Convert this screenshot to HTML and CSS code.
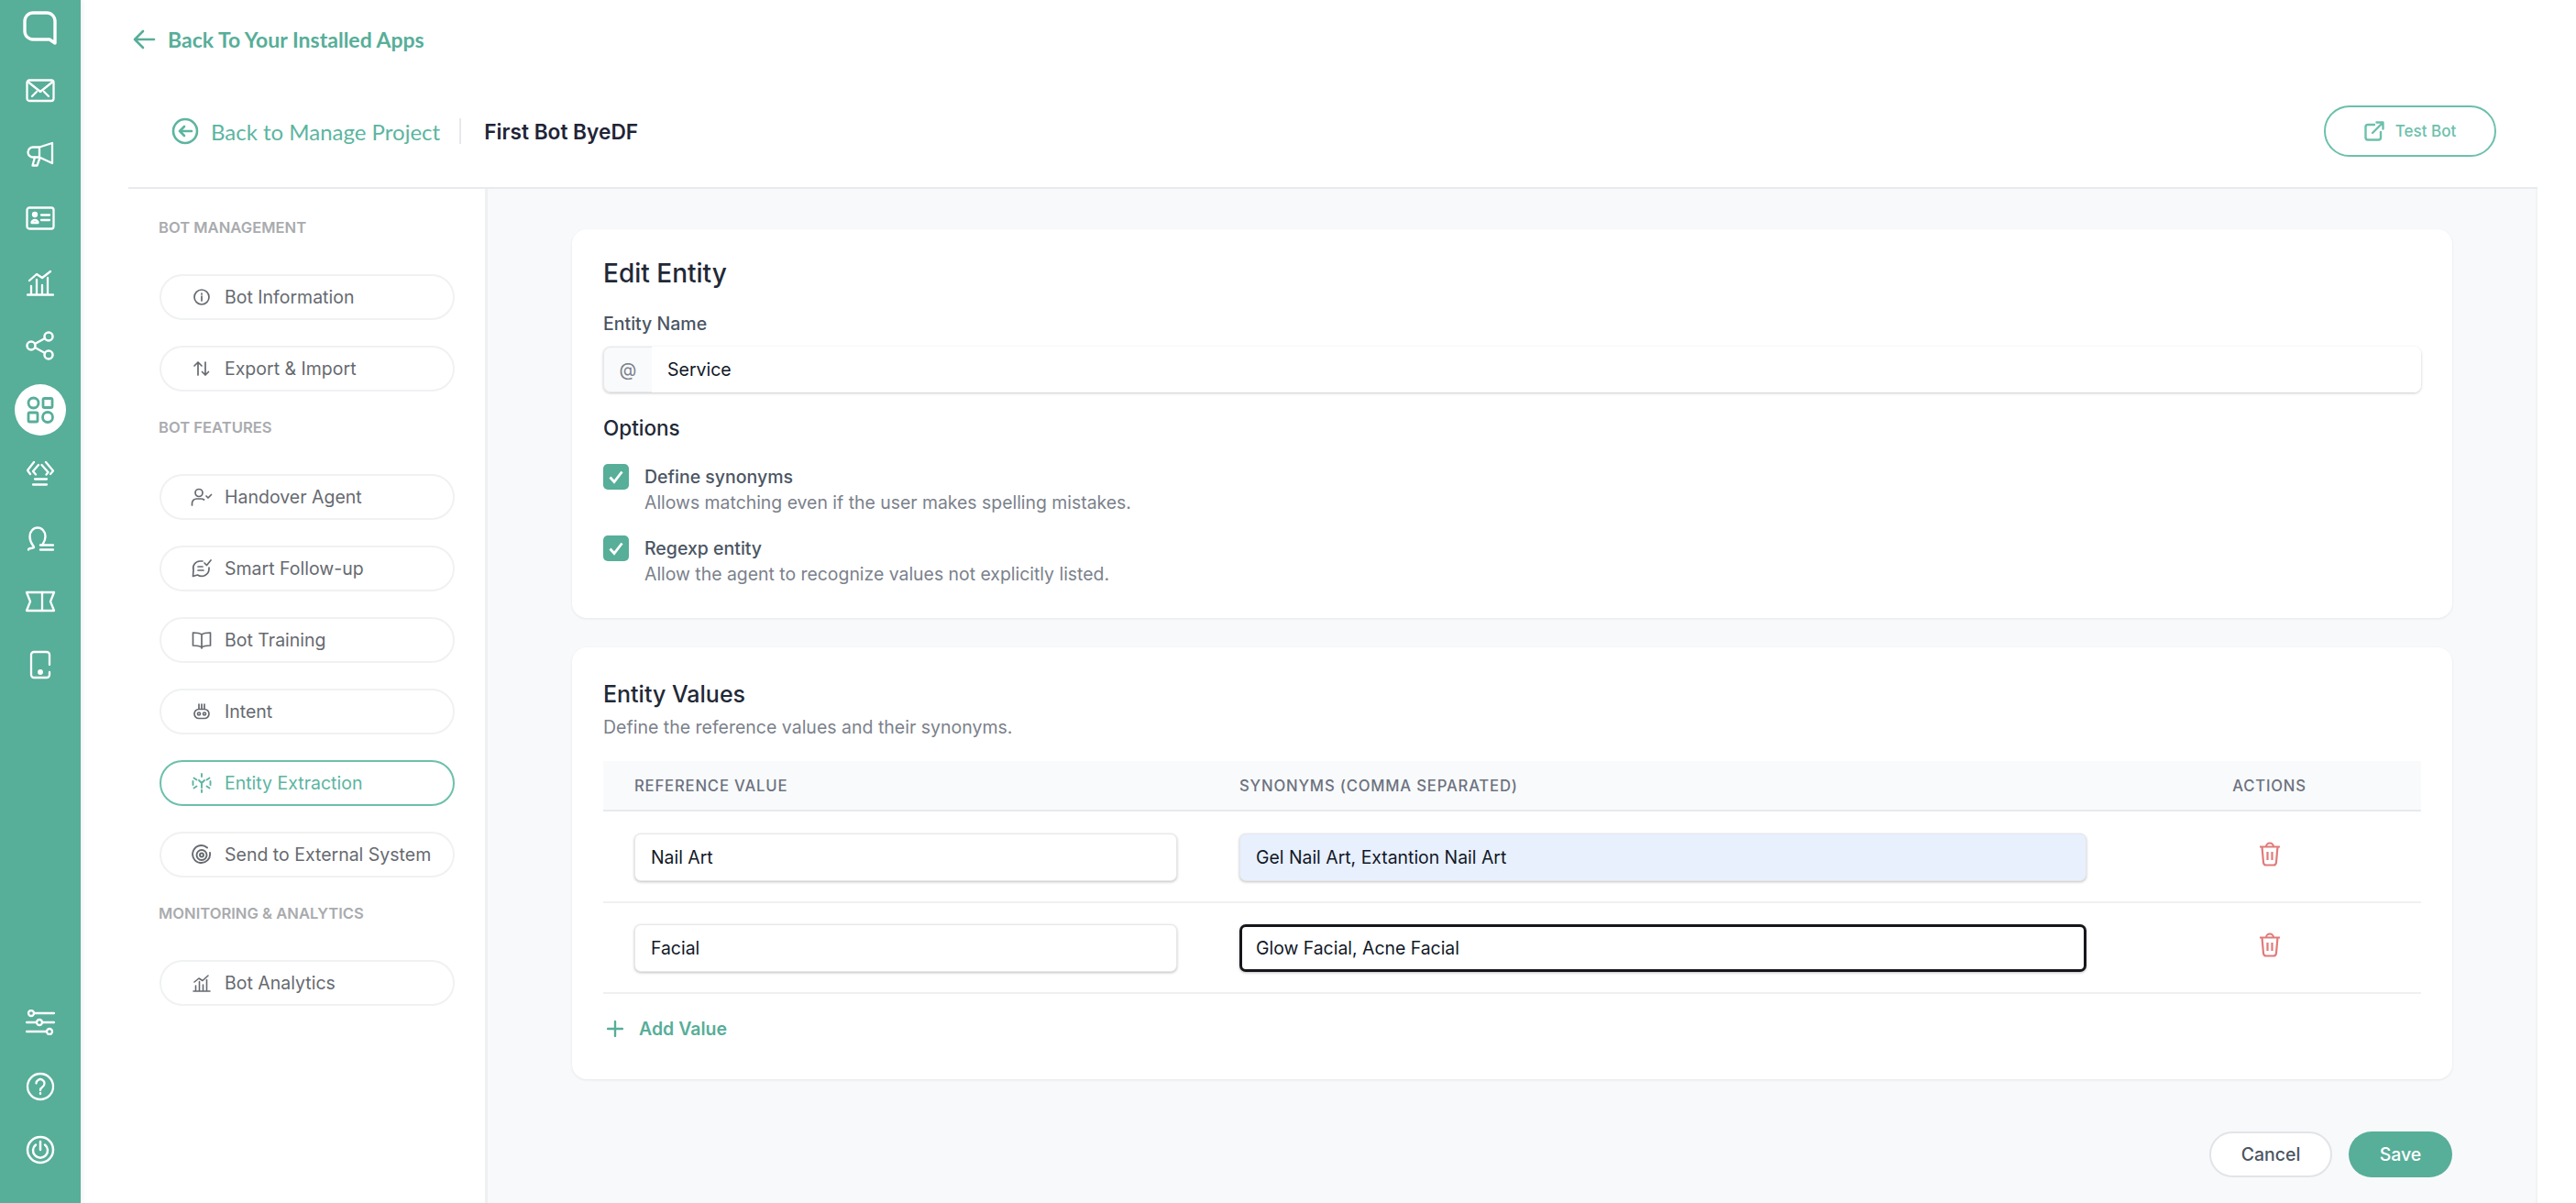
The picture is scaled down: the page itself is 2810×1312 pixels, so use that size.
FILE: index.html
```html
<!DOCTYPE html>
<html lang="en">
<head>
  <meta charset="UTF-8">
  <title>Edit Entity</title>
  <link rel="stylesheet" href="styles.css">
</head>
<body>
  <div class="rail">
    <div class="rail-logo">
      <svg class="ico" width="38" height="38" viewBox="0 0 38 38" stroke-width="3.400"><path d="M11 3h15a9 9 0 0 1 9 9v24l-6-4H11a9 9 0 0 1-9-9V12a9 9 0 0 1 9-9z"/></svg>
    </div>
    <div class="rail-list">
      <div class="rail-item">
        <svg class="ico" width="32" height="26" viewBox="0 0 32 26" stroke-width="2.300"><rect x="1.500" y="1.500" width="29" height="22.500" rx="2.500"/><path d="M3.500 4l12.500 10L28.500 4M7 19l5-5M25 19l-5-5"/></svg>
      </div>
      <div class="rail-item">
        <svg class="ico" width="30" height="28" viewBox="0 0 30 28" stroke-width="2.300"><path d="M28 2v22l-14-6.500H7a5.500 5.500 0 0 1 0-11h7L28 2zM14 6.500v11"/><path d="M9 17.500L6.500 26.500h5L14.500 18"/></svg>
      </div>
      <div class="rail-item">
        <svg class="ico" width="32" height="26" viewBox="0 0 32 26" stroke-width="2.300"><rect x="1.500" y="1.500" width="29" height="23" rx="2.500"/><circle cx="10" cy="9" r="2" fill="currentColor"/><path d="M6.500 18a3.500 3 0 0 1 7 0zM17 9.500h9M17 15h9"/></svg>
      </div>
      <div class="rail-item">
        <svg class="ico" width="30" height="30" viewBox="0 0 30 30" stroke-width="2.300"><path d="M1 28.500h28M5 27v-8M11 27V12M17 27v-9M23 27V10M3 13L11 6l6 4 9-7"/></svg>
      </div>
      <div class="rail-item">
        <svg class="ico" width="32" height="32" viewBox="0 0 32 32" stroke-width="2.500"><circle cx="6" cy="16" r="4.500"/><circle cx="25" cy="6" r="4.500"/><circle cx="25" cy="26" r="4.500"/><path d="M10 14l11-6M10 18l11 6"/></svg>
      </div>
      <div class="rail-item rail-active">
        <svg class="ico" width="30" height="30" viewBox="0 0 30 30" stroke-width="2.800"><circle cx="7.500" cy="7.500" r="5.500"/><rect x="18" y="2.500" width="10" height="10" rx="1.500"/><rect x="2" y="18" width="10" height="10" rx="1.500"/><circle cx="23" cy="23" r="5.500"/></svg>
      </div>
      <div class="rail-item">
        <svg class="ico" width="30" height="28" viewBox="0 0 30 28" stroke-width="2.300"><path d="M8 2L1 11l3 4M13 5l-6 7 3 3.500M21 2l8 9.500-3 3.500M16.500 5l7 8-2 2.500M9 20.500h13M7 26.500h15"/></svg>
      </div>
      <div class="rail-item">
        <svg class="ico" width="30" height="30" viewBox="0 0 30 30" stroke-width="2.400"><path d="M2 28.500c0-2 4-1 6-2.500.500-1.500-4.500-4-4.500-12a8.500 9.500 0 0 1 17 0c0 5-2.500 7.500-3.500 9.500"/><path d="M15 23.500h14M15 28.500h14"/></svg>
      </div>
      <div class="rail-item">
        <svg class="ico" width="34" height="24" viewBox="0 0 34 24" stroke-width="2.300"><path d="M2 2h30l-4 10 4 10H2l4-10L2 2z"/><path d="M19 2v20"/></svg>
      </div>
      <div class="rail-item">
        <svg class="ico" width="24" height="32" viewBox="0 0 24 32" stroke-width="2.300"><path d="M22 16V5a3 3 0 0 0-3-3H5a3 3 0 0 0-3 3v22a3 3 0 0 0 3 3h14a3 3 0 0 0 3-3v-3"/><circle cx="12" cy="24" r="1.800" fill="currentColor"/></svg>
      </div>
    </div>
    <div class="rail-bottom">
      <div class="rail-item">
        <svg class="ico" width="32" height="28" viewBox="0 0 32 28" stroke-width="2.300"><circle cx="6" cy="4" r="3"/><circle cx="15" cy="14" r="3"/><circle cx="26" cy="24" r="3"/><path d="M9 4h22M1 14h11M18 14h13M1 24h22"/></svg>
      </div>
      <div class="rail-item">
        <svg class="ico" width="32" height="32" viewBox="0 0 32 32" stroke-width="2.300"><circle cx="16" cy="16" r="14"/><path d="M11.500 12.500a4.500 4.500 0 1 1 6.800 3.900c-1.500.9-2.300 1.700-2.300 3.600M16 23v1"/></svg>
      </div>
      <div class="rail-item">
        <svg class="ico" width="32" height="32" viewBox="0 0 32 32" stroke-width="2.500"><circle cx="16" cy="16" r="14"/><path d="M11 10.500a8 8 0 1 0 10 0M16 7v9"/></svg>
      </div>
    </div>
  </div>

  <div class="page">
    <div class="top-link">
      <svg class="ico" width="26" height="24" viewBox="0 0 26 24" stroke-width="2.600"><path d="M24 12H3M12 3l-9 9 9 9"/></svg>
      <span>Back To Your Installed Apps</span>
    </div>

    <div class="page-head">
      <div class="back-project">
        <svg class="ico" width="30" height="30" viewBox="0 0 30 30" stroke-width="2.600"><circle cx="15" cy="15" r="13"/><path d="M22 15H9M14 10l-5 5 5 5"/></svg>
        <span>Back to Manage Project</span>
      </div>
      <div class="bot-name">First Bot ByeDF</div>
      <div class="test-btn">
        <svg class="ico" width="22" height="22" viewBox="0 0 22 22" stroke-width="2.400"><path d="M11 4H4a2.500 2.500 0 0 0-2.500 2.500V18A2.500 2.500 0 0 0 4 20.500h11.500A2.500 2.500 0 0 0 18 18v-6M9 13L20 2M13.500 1.500h7v7"/></svg>
        <span>Test Bot</span>
      </div>
    </div>

    <div class="workspace">
      <div class="sidebar">
        <div class="side-label">BOT MANAGEMENT</div>
        <div class="side-list">
          <div class="pill">
            <svg class="ico" width="20" height="20" viewBox="0 0 20 20" stroke-width="1.700"><circle cx="10" cy="10" r="8"/><path d="M10 9v5M10 6v1"/></svg>
            <span>Bot Information</span>
          </div>
          <div class="pill">
            <svg class="ico" width="20" height="20" viewBox="0 0 20 20" stroke-width="1.700"><path d="M6 17V3M2 7l4-4 4 4M14 3v14M10.500 13.500l3.500 3.500 3.500-3.500"/></svg>
            <span>Export &amp; Import</span>
          </div>
        </div>
        <div class="side-label">BOT FEATURES</div>
        <div class="side-list">
          <div class="pill">
            <svg class="ico" width="24" height="20" viewBox="0 0 24 20" stroke-width="1.700"><circle cx="9" cy="5.500" r="4"/><path d="M1.500 19v-2a5 5 0 0 1 5-5h5a5 5 0 0 1 3 1M17 9l2 2 3.500-3.500"/></svg>
            <span>Handover Agent</span>
          </div>
          <div class="pill">
            <svg class="ico" width="22" height="22" viewBox="0 0 22 22" stroke-width="1.700"><path d="M12 3H9a7.500 7.500 0 0 0-7 9.500l-.500 7 5-1.500a8 8 0 0 0 12.500-6.500V10M14 5l2.500 2.500L21 2M7 9h5M7 13h6"/></svg>
            <span>Smart Follow-up</span>
          </div>
          <div class="pill">
            <svg class="ico" width="22" height="20" viewBox="0 0 22 20" stroke-width="1.700"><path d="M11 4C9 2.500 6 2 1.500 2v14C6 16 9 16.500 11 18c2-1.500 5-2 9.500-2V2C16 2 13 2.500 11 4zM11 4v15"/></svg>
            <span>Bot Training</span>
          </div>
          <div class="pill">
            <svg class="ico" width="20" height="20" viewBox="0 0 20 20" stroke-width="1.700"><rect x="2" y="7.500" width="16" height="10" rx="5"/><circle cx="7" cy="12.500" r="1.500"/><circle cx="13" cy="12.500" r="1.500"/><path d="M7 2v5M10 2v5M13 2v5"/></svg>
            <span>Intent</span>
          </div>
          <div class="pill pill-active">
            <svg class="ico" width="22" height="22" viewBox="0 0 22 22" stroke-width="1.900"><path d="M11 1v3M11 18.500v2.500M11 16v-5M11 11L8 8M11 11l3-3M2.500 5.500l3 2M19.500 5.500l-3 2M2.500 16.500l3-2M19.500 16.500l-3-2M1.500 9v4M20.500 9v4"/></svg>
            <span>Entity Extraction</span>
          </div>
          <div class="pill">
            <svg class="ico" width="22" height="22" viewBox="0 0 22 22" stroke-width="1.900"><path d="M17 3.500A9.500 9.500 0 1 0 20 9"/><circle cx="11" cy="11.500" r="5.500"/><circle cx="11" cy="11.500" r="2"/></svg>
            <span>Send to External System</span>
          </div>
        </div>
        <div class="side-label">MONITORING &amp; ANALYTICS</div>
        <div class="side-list">
          <div class="pill">
            <svg class="ico" width="20" height="20" viewBox="0 0 20 20" stroke-width="1.600"><path d="M1 19h18M3.500 18v-5M7.500 18V8.500M11.500 18v-6M15.500 18V6.500M2 9l5-4 4 2.500L17 2"/></svg>
            <span>Bot Analytics</span>
          </div>
        </div>
      </div>

      <div class="main">
        <div class="card card-entity">
          <h2 class="card-title">Edit Entity</h2>
          <div class="field-label">Entity Name</div>
          <div class="input-group">
            <div class="input-addon">@</div>
            <div class="input-main">Service</div>
          </div>
          <div class="options-title">Options</div>
          <div class="check-row">
            <div class="check">
              <svg width="18" height="16" viewBox="0 0 18 16" fill="none" stroke="#fff" stroke-width="2.800"><path d="M2.500 8.500l4.500 5L15.500 2.500"/></svg>
            </div>
            <div>
              <div class="check-name">Define synonyms</div>
              <div class="check-desc">Allows matching even if the user makes spelling mistakes.</div>
            </div>
          </div>
          <div class="check-row">
            <div class="check">
              <svg width="18" height="16" viewBox="0 0 18 16" fill="none" stroke="#fff" stroke-width="2.800"><path d="M2.500 8.500l4.500 5L15.500 2.500"/></svg>
            </div>
            <div>
              <div class="check-name">Regexp entity</div>
              <div class="check-desc">Allow the agent to recognize values not explicitly listed.</div>
            </div>
          </div>
        </div>

        <div class="card card-values">
          <h2 class="card-title">Entity Values</h2>
          <div class="card-desc">Define the reference values and their synonyms.</div>
          <div class="values-table">
            <div class="values-row values-head">
              <div class="cell">REFERENCE VALUE</div>
              <div class="cell">SYNONYMS (COMMA SEPARATED)</div>
              <div class="cell cell-action">ACTIONS</div>
            </div>
            <div class="values-row">
              <div class="cell"><div class="text-input">Nail Art</div></div>
              <div class="cell"><div class="text-input is-autofill">Gel Nail Art, Extantion Nail Art</div></div>
              <div class="cell cell-action">
                <svg class="trash" width="24" height="28" viewBox="0 0 24 28" fill="none" stroke="#e27a7a" stroke-width="2.200"><path d="M1 6.500h22M3.500 6.500l1.500 17a3 3 0 0 0 3 3h8a3 3 0 0 0 3-3l1.500-17M8 6.500a4 4 0 0 1 8 0M9.500 12v9M14.500 12v9"/></svg>
              </div>
            </div>
            <div class="values-row">
              <div class="cell"><div class="text-input">Facial</div></div>
              <div class="cell"><div class="text-input is-focus">Glow Facial, Acne Facial</div></div>
              <div class="cell cell-action">
                <svg class="trash" width="24" height="28" viewBox="0 0 24 28" fill="none" stroke="#e27a7a" stroke-width="2.200"><path d="M1 6.500h22M3.500 6.500l1.500 17a3 3 0 0 0 3 3h8a3 3 0 0 0 3-3l1.500-17M8 6.500a4 4 0 0 1 8 0M9.500 12v9M14.500 12v9"/></svg>
              </div>
            </div>
          </div>
          <div class="add-value">
            <svg class="ico" width="18" height="18" viewBox="0 0 18 18" stroke-width="2.400"><path d="M9 1v16M1 9h16"/></svg>
            <span>Add Value</span>
          </div>
        </div>

        <div class="form-actions">
          <div class="btn btn-cancel">Cancel</div>
          <div class="btn btn-save">Save</div>
        </div>
      </div>
    </div>
  </div>
</body>
</html>
```

FILE: styles.css
```css
* {
  box-sizing: border-box;
}
body {
  margin: 0;
  height: 1312px;
  display: flex;
  overflow: hidden;
  background: #fff;
  font-family: Inter, 'Noto Sans', sans-serif;
  color: #374151;
}
.ico {
  display: block;
  flex: none;
  fill: none;
  stroke: currentColor;
  stroke-linecap: round;
  stroke-linejoin: round;
}

/* left rail */
.rail {
  width: 88px;
  flex: none;
  display: flex;
  flex-direction: column;
  background: #57ae99;
  color: #fff;
  box-shadow: 2px 0 6px rgba(0, 0, 0, 0.06);
}
.rail-logo {
  height: 60px;
  display: flex;
  align-items: center;
  justify-content: center;
}
.rail-list {
  margin-top: 4px;
}
.rail-item {
  height: 69.6px;
  display: flex;
  align-items: center;
  justify-content: center;
}
.rail-active {
  position: relative;
  color: #57ae99;
}
.rail-active::before {
  content: "";
  position: absolute;
  width: 56px;
  height: 56px;
  border-radius: 50%;
  background: #fff;
}
.rail-active svg {
  position: relative;
}
.rail-bottom {
  margin-top: auto;
  padding-bottom: 23px;
}

/* page head */
.page {
  flex: 1;
  display: flex;
  flex-direction: column;
  margin: 0 42px 0 52px;
  min-width: 0;
}
.top-link {
  height: 86px;
  padding-left: 4px;
  display: flex;
  align-items: center;
  gap: 13px;
  color: #57ae99;
  font-family: Lato, sans-serif;
  font-size: 23px;
  font-weight: 700;
}
.page-head {
  height: 118px;
  padding: 29px 45px 33px 47px;
  display: flex;
  align-items: center;
}
.back-project {
  display: flex;
  align-items: center;
  gap: 13px;
  padding-right: 21px;
  border-right: 2px solid #e6e8eb;
  height: 28px;
  color: #5cb5a0;
  font-family: Lato, sans-serif;
  font-size: 24px;
}
.bot-name {
  margin-left: 25px;
  font-size: 22.700px;
  font-weight: 600;
  color: #1f2437;
}
.test-btn {
  margin-left: auto;
  width: 188px;
  height: 56px;
  border: 2px solid #6cc0ab;
  border-radius: 28px;
  display: flex;
  align-items: center;
  justify-content: center;
  gap: 12px;
  color: #6cc0ab;
  font-size: 17px;
  font-weight: 500;
}

/* workspace */
.workspace {
  flex: 1;
  display: flex;
  min-height: 0;
  border-top: 2px solid #e8eaed;
}
.sidebar {
  width: 392px;
  flex: none;
  padding: 32px 33px 0 33px;
  border-right: 3px solid #eff0f2;
}
.side-label {
  height: 20px;
  line-height: 20px;
  font-size: 16.600px;
  font-weight: 600;
  color: #a9abae;
}
.side-list {
  margin: 41px 0 29px 1px;
  display: flex;
  flex-direction: column;
  gap: 28px;
}
.pill {
  height: 50px;
  border: 2px solid #f0f1f3;
  border-radius: 25px;
  padding-left: 32px;
  display: flex;
  align-items: center;
  color: #666a70;
  font-size: 19.500px;
}
.pill .ico {
  width: 24px;
  margin-right: 13px;
}
.pill-active {
  border-color: #6cc0ab;
  color: #5cb5a0;
}

/* main column */
.main {
  flex: 1;
  min-width: 0;
  padding: 44px 91px 0 92px;
  background: #f8f9fb;
  border-right: 2px solid #f2f3f5;
}
.card {
  background: #fff;
  border-radius: 16px;
  padding: 0 34px;
  box-shadow: 0 1px 3px rgba(0, 0, 0, 0.08);
}
.card-entity {
  padding-top: 31px;
  padding-bottom: 34px;
}
.card-values {
  margin-top: 32px;
  padding-top: 34px;
  padding-bottom: 41px;
}
.card-title {
  margin: 0;
  line-height: 34px;
  font-size: 28px;
  font-weight: 500;
  color: #1f2937;
}
.card-values .card-title {
  font-size: 25px;
}
.field-label {
  margin-top: 26px;
  line-height: 24px;
  font-size: 19.500px;
  font-weight: 500;
  color: #4b5563;
}
.input-group {
  margin-top: 13px;
  height: 50px;
  display: flex;
  border-radius: 8px;
  box-shadow: 0 1px 3px rgba(0, 0, 0, 0.22);
}
.input-addon {
  width: 53px;
  display: flex;
  align-items: center;
  justify-content: center;
  background: #f9fafb;
  border: 1px solid #e5e7eb;
  border-right: none;
  border-radius: 8px 0 0 8px;
  color: #7b818c;
  font-size: 19.500px;
}
.input-main {
  flex: 1;
  padding-left: 17px;
  display: flex;
  align-items: center;
  background: #fff;
  border-radius: 0 8px 8px 0;
  font-size: 19.500px;
  color: #111827;
}
.options-title {
  margin-top: 25px;
  line-height: 28px;
  font-size: 22.500px;
  font-weight: 500;
  color: #1f2937;
}
.check-row {
  margin-top: 22px;
  display: flex;
  gap: 17px;
}
.options-title + .check-row {
  margin-top: 25px;
}
.check {
  width: 28px;
  height: 28px;
  flex: none;
  display: flex;
  align-items: center;
  justify-content: center;
  border-radius: 5px;
  background: #57ae99;
}
.check-name {
  line-height: 28px;
  font-size: 19.500px;
  font-weight: 500;
  color: #4b5563;
}
.check-desc {
  line-height: 28px;
  font-size: 19.400px;
  color: #7b818c;
}
.card-desc {
  margin-top: 6px;
  line-height: 26px;
  font-size: 19.500px;
  color: #7b818c;
}

/* values table */
.values-table {
  margin-top: 24px;
}
.values-row {
  height: 99.500px;
  padding-top: 2px;
  display: grid;
  grid-template-columns: 660px 992px 331px;
  align-items: center;
  border-bottom: 2px solid #eef0f2;
}
.values-head {
  height: 55px;
  padding-top: 0;
  background: #f9fafb;
  border-bottom-color: #e8eaed;
  font-size: 16.700px;
  font-weight: 500;
  letter-spacing: 0.8px;
  color: #6b7280;
}
.cell {
  padding: 0 34px;
}
.cell-action {
  display: flex;
  justify-content: center;
}
.trash {
  display: block;
  margin-top: -8px;
}
.text-input {
  height: 52px;
  padding-left: 17px;
  display: flex;
  align-items: center;
  background: #fff;
  border: 1px solid #e5e7eb;
  border-radius: 7px;
  box-shadow: 0 1px 3px rgba(0, 0, 0, 0.25);
  font-size: 19.400px;
  color: #111827;
}
.is-autofill {
  background: #e8f0fe;
}
.is-focus {
  border: 3px solid #15171a;
  padding-left: 15px;
}
.add-value {
  margin-top: 24px;
  height: 28px;
  padding-left: 4px;
  display: flex;
  align-items: center;
  gap: 17px;
  color: #57ae99;
  font-size: 19.500px;
  font-weight: 600;
}

/* footer buttons */
.form-actions {
  margin-top: 57px;
  display: flex;
  justify-content: flex-end;
  gap: 18px;
}
.btn {
  height: 50px;
  display: flex;
  align-items: center;
  justify-content: center;
  border-radius: 25px;
  font-size: 19.500px;
  font-weight: 500;
}
.btn-cancel {
  width: 134px;
  background: #fff;
  border: 2px solid #e2e4e8;
  color: #4b5563;
}
.btn-save {
  width: 113px;
  background: #57ae99;
  color: #fff;
}
```
